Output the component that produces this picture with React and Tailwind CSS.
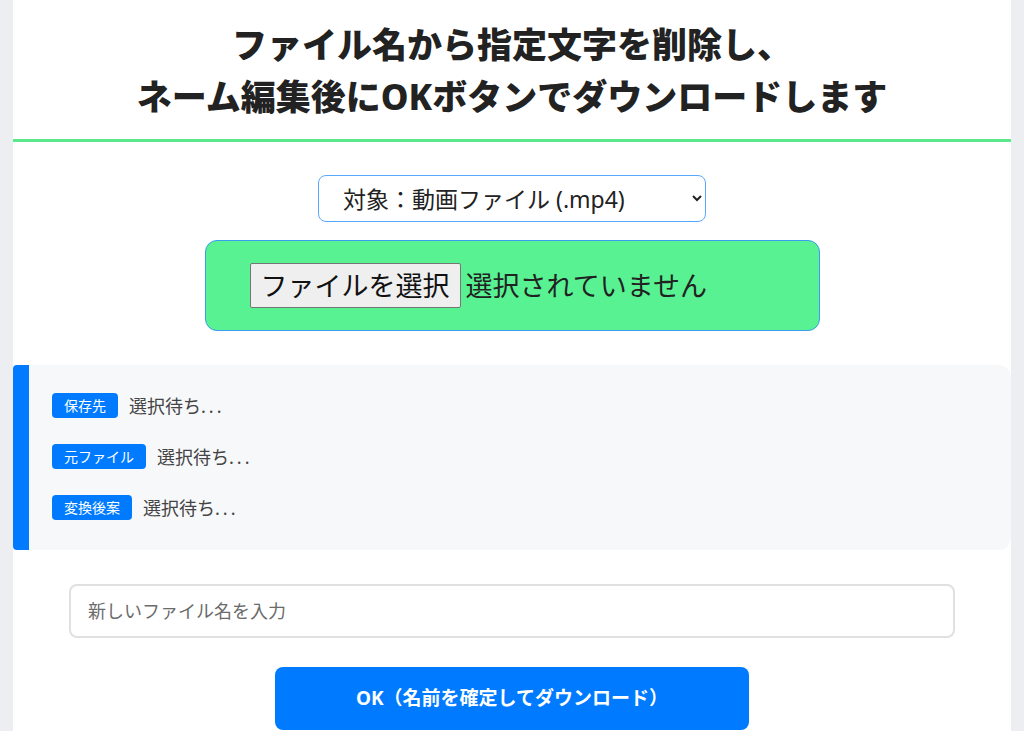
import React from "react";

export default function App() {
  const rows = [
    ["保存先", "選択待ち"],
    ["元ファイル", "選択待ち"],
    ["変換後案", "選択待ち"],
  ];
  return (
    <div className="min-h-screen bg-[#eceef2] px-[13px] font-['Noto_Sans','Noto_Sans_CJK_JP',sans-serif]">
      <div className="bg-white min-h-[731px] pb-10">
        <header className="pt-[19px] pb-[16px] border-b-[3px] border-[#5be88c]">
          <h1 className="text-center text-[35px] leading-[52px] font-extrabold text-[#222]">
            ファイル名から指定文字を削除し、
            <br />
            ネーム編集後にOKボタンでダウンロードします
          </h1>
        </header>

        <div className="flex flex-col items-center mt-[33px]">
          <select className="w-[388px] h-[47px] border border-[#5aa7ff] rounded-[8px] bg-white pl-[20px] pr-[10px] text-[23px] text-[#222] outline-none">
            <option>対象：動画ファイル (.mp4)</option>
          </select>

          <div className="mt-[18px] w-[615px] h-[91px] bg-[#58f292] border border-[#3b9cf0] rounded-[12px] flex items-center pl-[44px]">
            <label className="h-[45px] px-[10px] flex items-center bg-[#efefef] border border-[#767676] rounded-[2px] text-[27px] text-[#111] leading-none">
              ファイルを選択
            </label>
            <span className="ml-[5px] text-[27px] text-[#222] leading-none">選択されていません</span>
          </div>
        </div>

        <div className="mt-[34px] bg-[#f7f8fa] border-l-[16px] border-[#007bff] rounded-l-[4px] rounded-r-[12px] pl-[23px] pt-[28px] pb-[30px] flex flex-col gap-[26px]">
          {rows.map(([label, val]) => (
            <div key={label} className="flex items-center h-[25px]">
              <span className="h-[25px] px-[12px] flex items-center bg-[#007bff] text-white text-[14px] rounded-[4px] leading-none">
                {label}
              </span>
              <span className="ml-[11px] text-[18px] text-[#444] leading-none">
                {val}
                <span className="tracking-[3px]">...</span>
              </span>
            </div>
          ))}
        </div>

        <div className="mt-[34px] px-[56px]">
          <input
            type="text"
            placeholder="新しいファイル名を入力"
            className="w-full h-[54px] border-2 border-[#e0e0e0] rounded-[8px] px-[17px] text-[18px] text-[#222] placeholder:text-[#6b6b6b] outline-none"
          />
        </div>

        <div className="flex justify-center mt-[29px]">
          <button className="w-[474px] h-[63px] bg-[#007bff] text-white text-[19px] font-bold rounded-[8px]">
            OK（名前を確定してダウンロード）
          </button>
        </div>
      </div>
    </div>
  );
}
